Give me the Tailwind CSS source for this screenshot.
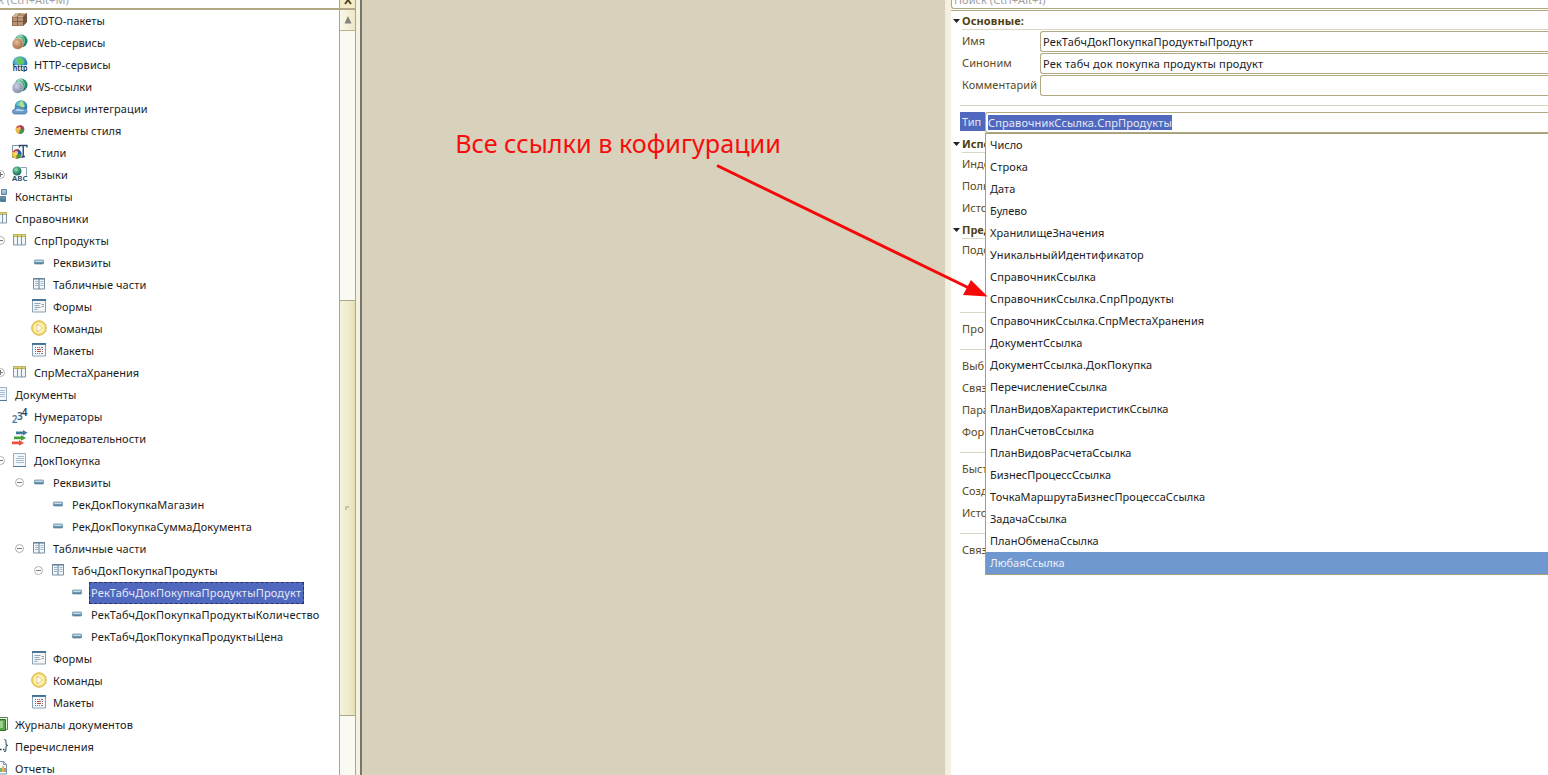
<!DOCTYPE html>
<html lang="ru">
<head>
<meta charset="utf-8">
<title>Конфигуратор</title>
<script src="https://cdn.jsdelivr.net/npm/@tailwindcss/browser@4"></script>
</head>
<body class="relative flex h-[775px] w-[1548px] overflow-hidden bg-[#d8d2bd] font-['Noto_Sans',sans-serif] text-[11px] text-[#1c1c1c]">

<svg class="absolute h-0 w-0">
  <defs>
    <linearGradient id="gb" x1="0" y1="0" x2="0" y2="1"><stop offset="0" stop-color="#b5d3e4"/><stop offset="1" stop-color="#41718f"/></linearGradient>
    <radialGradient id="gg" cx=".4" cy=".35" r=".75"><stop offset="0" stop-color="#a5dfb8"/><stop offset=".5" stop-color="#2f9a72"/><stop offset="1" stop-color="#155a5c"/></radialGradient>
    <radialGradient id="gl" cx=".4" cy=".3" r=".8"><stop offset="0" stop-color="#8fd8c0"/><stop offset=".45" stop-color="#38a0c4"/><stop offset="1" stop-color="#1d5fa0"/></radialGradient>
    <radialGradient id="go" cx=".4" cy=".35" r=".7"><stop offset="0" stop-color="#e8bc94"/><stop offset="1" stop-color="#9c6440"/></radialGradient>
    <radialGradient id="gs" cx=".4" cy=".35" r=".7"><stop offset="0" stop-color="#ccd4e4"/><stop offset="1" stop-color="#76849f"/></radialGradient>
    <radialGradient id="gy" cx=".5" cy=".5" r=".5"><stop offset="0" stop-color="#fffce8"/><stop offset=".65" stop-color="#fbf0a8"/><stop offset="1" stop-color="#ecca50"/></radialGradient>
  </defs>
  <symbol id="minus" viewBox="0 0 10 10"><circle cx="5.500" cy="4.500" r="4" fill="#fff" stroke="#a8a8a8" stroke-width=".9"/><path d="M3 4.500h5" stroke="#777"/></symbol>
  <symbol id="plus" viewBox="0 0 10 10"><circle cx="5.500" cy="4.500" r="4" fill="#fff" stroke="#a8a8a8" stroke-width=".9"/><path d="M3 4.500h5M5.500 2v5" stroke="#777"/></symbol>
  <symbol id="box" viewBox="0 0 16 16"><path d="M4 1h11v9l-4 4H0V5z" fill="#8d6b50"/><path d="M4 1h11l-4 4H0z" fill="#d3b394"/><path d="M1 5.500h10v8H1z" fill="#b89474"/><path d="M11 5l4-4v9l-4 4z" fill="#765640"/><path d="M.5 9.500h10.500l4-4M5.500 5v9M7 3h6M8 1L5 5" stroke="#6b4c38" stroke-width=".7" fill="none"/></symbol>
  <symbol id="web" viewBox="0 0 16 16"><circle cx="9" cy="7" r="6.500" fill="url(#gg)"/><path d="M5.500 2.500q3-2 5.500 0" fill="none" stroke="#c8ecd4"/><path d="M11.500 3.500q2 3 .5 6" fill="none" stroke="#6fc59a"/><circle cx="5.700" cy="9.700" r="5.600" fill="url(#go)" stroke="#f4efe9" stroke-width=".5"/></symbol>
  <symbol id="ws" viewBox="0 0 16 16"><circle cx="9" cy="7" r="6.500" fill="url(#gg)"/><path d="M5.500 2.500q3-2 5.500 0" fill="none" stroke="#c8ecd4"/><path d="M11.500 3.500q2 3 .5 6" fill="none" stroke="#6fc59a"/><circle cx="5.700" cy="9.700" r="5.600" fill="url(#gs)" stroke="#eef1f6" stroke-width=".5"/></symbol>
  <symbol id="http" viewBox="0 0 16 16"><circle cx="8" cy="7.500" r="7.300" fill="url(#gl)"/><path d="M5 2c3-1 6 0 7 3s-3 4-5 3-3-4-2-6" fill="#68c65a"/><path d="M1 9h15v7H1z" fill="#fff" opacity=".85"/><text x=".8" y="15" font-family="Noto Sans" font-weight="600" font-size="8" textLength="14.700" lengthAdjust="spacingAndGlyphs" fill="#1c2a38">http</text></symbol>
  <symbol id="cloud" viewBox="0 0 16 16"><circle cx="9" cy="6.500" r="6.300" fill="url(#gl)"/><path d="M9 1c3 0 2 3 4 5l-2 2-4-3z" fill="#b5df83"/><path d="M2.500 14C-.5 13.500 0 9.500 3 9c1-3 5-3 6-1 3-.5 6 1 6 3s-1 3-3 3z" fill="#6b9ccc" stroke="#356a9f" stroke-width=".7"/><path d="M3 11q2-3 5-1.500 4 0 4 1.500z" fill="#bfd9ef"/></symbol>
  <symbol id="ball" viewBox="0 0 16 16"><circle cx="8" cy="7.500" r="4.300" fill="#d0403a"/><path d="M8 7.500V3.200a4.300 4.300 0 0 1 4.300 4.300z" fill="#a8445a"/><path d="M8 7.500h4.300a4.300 4.300 0 0 1-5.300 4.200z" fill="#3f9b50"/><path d="M8 7.500L4.300 5.500A4.300 4.300 0 0 0 7 11.700z" fill="#edbd35"/><circle cx="7.300" cy="6.300" r="1.500" fill="#ffe6a6" opacity=".7"/></symbol>
  <symbol id="style" viewBox="0 0 16 16"><path d="M.5 1.500h11v12H.5z" fill="#f8fafc" stroke="#7d93aa"/><circle cx="4.800" cy="10" r="4.700" fill="#d93b35"/><path d="M4.800 10V5.300A4.700 4.700 0 0 1 9.500 10z" fill="#285ab0"/><path d="M4.800 10H9.500a4.700 4.700 0 0 1-5.300 4.700z" fill="#3d9d49"/><path d="M4.800 10L.8 7.500A4.700 4.700 0 0 0 4.200 14.600z" fill="#f0ce30"/><circle cx="4.200" cy="9" r="2" fill="#fff0a8" opacity=".75"/><path d="M7 1.500h8.500M7.500 1v2.500M15 1v2.500M11.200 1v11.500M9.500 12.500h3.500" stroke="#294d6b" stroke-width="1.300" fill="none"/></symbol>
  <symbol id="lang" viewBox="0 0 16 16"><path d="M8.500 1.500h6v8" fill="none" stroke="#8da3b8"/><circle cx="5" cy="5" r="4.500" fill="url(#gg)"/><text x="0" y="15" font-family="Noto Sans" font-weight="600" font-size="7" textLength="15.500" lengthAdjust="spacingAndGlyphs" fill="#1e4868">ABC</text></symbol>
  <symbol id="const" viewBox="0 0 16 16"><path d="M8.500 1.500h5v5h-5zM1.500 8.500h4v4h-4zM7.500 8.500h5v5h-5z" fill="url(#gb)" stroke="#40708f" stroke-width=".8"/></symbol>
  <symbol id="cat" viewBox="0 0 16 16"><path d="M1.500 2.500h12v10.500h-12z" fill="#f0f5f9" stroke="#8299ad"/><path d="M1 2h13v3H1z" fill="#bdb552"/><path d="M1.500 4v9M5.500 4v9M9.500 4v9M13.500 4v9" stroke="#7d94aa"/><path d="M2 3.500h3M6 3.500h3M10 3.500h3" stroke="#ddd584"/></symbol>
  <symbol id="req" viewBox="0 0 16 16"><rect x="3.400" y="6" width="9.200" height="4" rx=".8" fill="url(#gb)" stroke="#6f93ab" stroke-width=".8"/><path d="M4.500 7.500h7" stroke="#c4dce8"/></symbol>
  <symbol id="tab" viewBox="0 0 16 16"><path d="M2.500 2.500h11v10.500h-11z" fill="#f4f8fb" stroke="#7890a6"/><path d="M2 3h12" stroke="#56748e"/><path d="M8 2v11" stroke="#5b7893"/><path d="M4 5.500h3M4 7.500h3M4 9.500h3M9.500 5.500h3M9.500 7.500h3M9.500 9.500h3" stroke="#a3b5c4"/></symbol>
  <symbol id="form" viewBox="0 0 16 16"><path d="M1.500 1.500h13v12.500h-13z" fill="#f2f6f9" stroke="#88a1b5"/><path d="M1 2h14" stroke="#3d6c8f" stroke-width="1.800"/><path d="M3.500 5.500h6M3.500 7.500h5M3.500 9.500h6M3.500 11.500h3M10.500 6.500h2.500M10.500 8.500h2.500" stroke="#9aa4ab"/></symbol>
  <symbol id="cmd" viewBox="0 0 16 16"><circle cx="8" cy="8" r="7.300" fill="url(#gy)" stroke="#d6b04a" stroke-width=".9"/><path d="M6 4v8l5.500-4z" fill="#fffef6" stroke="#d8bb64" stroke-width=".8"/></symbol>
  <symbol id="mak" viewBox="0 0 16 16"><path d="M1.500 1.500h13v12.500h-13z" fill="#f7fafc" stroke="#88a1b5"/><path d="M1 2h14" stroke="#3d6c8f" stroke-width="1.800"/><path d="M4 5.500h8M4 11.500h8M4.500 5v7M11.500 5v7" fill="none" stroke="#777" stroke-dasharray="1 1"/><path d="M6 7.500h4M6 9.500h4" stroke="#c8433c" stroke-width="1.100"/></symbol>
  <symbol id="doc" viewBox="0 0 16 16"><path d="M1.500 1.500h12v13h-12z" fill="#f1f7fc" stroke="#9cb1c4"/><path d="M1 14.500h13" stroke="#527799"/><path d="M6 4.500h6M4 6.500h8M4 8.500h8M4 10.500h8" stroke="#a9bdd0"/></symbol>
  <symbol id="num" viewBox="0 0 16 16"><g font-family="Noto Sans" font-weight="600" fill="#315f83"><text x="-.2" y="15" font-size="10" fill="#4d80a8">2</text><text x="5" y="11.500" font-size="10">3</text><text x="9.800" y="7.500" font-size="10" fill="#24455f">4</text></g></symbol>
  <symbol id="seq" viewBox="0 0 16 16"><path d="M4 1.500h7V0L15.500 2.700 11 5.500V4.200H4z" fill="#3f7a9d"/><path d="M2 6.500h7V5l5 2.900-5 2.900V9.300H2z" fill="#43a33b"/><path d="M0 11.500h7V10l5 2.900-5 2.900V14.300H0z" fill="#e8523f"/></symbol>
  <symbol id="jour" viewBox="0 0 16 16"><path d="M5 1.500h9.500v12H5z" fill="#e9f5e2" stroke="#4d8a42"/><path d="M2 3.500h10.500v11H2z" fill="#58a64c" stroke="#2f7029"/><path d="M3 5h7v7H3z" fill="#9bd08b"/></symbol>
  <symbol id="enum" viewBox="0 0 16 16"><path d="M11 1.500q2 0 2 2v2q0 2 2 2-2 0-2 2v2q0 2-2 2" fill="none" stroke="#456b88" stroke-width="1.200"/><path d="M7 11.500h1.500M10 11.500h1.500" stroke="#333" stroke-width="1.300"/></symbol>
  <symbol id="rep" viewBox="0 0 16 16"><path d="M2.500 1.500h8l3 3v9.500h-11z" fill="#f8fbfe" stroke="#7795ac"/><path d="M10.500 1.500v3h3" fill="none" stroke="#7795ac"/><path d="M8 12V8" stroke="#4e9b48" stroke-width="1.500"/><path d="M10 12V6" stroke="#cfa530" stroke-width="1.500"/><path d="M12 12V8" stroke="#c36d35" stroke-width="1.500"/></symbol>
</svg>

<!-- Дерево конфигурации -->
<aside class="flex h-full w-[362px] shrink-0 border-r-2 border-[#77766b] bg-[#f4f1de]">
  <div class="flex w-[339px] flex-col overflow-hidden bg-white">
    <div class="flex h-[10px] shrink-0 items-end border-b-2 border-[#b0a983] text-[#a0a0a0]"><span class="-ml-[29px] mb-[1px] whitespace-nowrap leading-[15px] tracking-[.05px]">Поиск (Ctrl+Alt+M)</span></div>
    <ul id="tree" class="flex flex-col"></ul>
  </div>
  <div class="flex w-[17px] shrink-0 flex-col border-x border-[#aaa790] bg-[#faf9f4]">
    <div class="flex h-[10px] shrink-0 items-start justify-center overflow-hidden border-b-2 border-[#b0a983] bg-[#f3ebc8]"><svg class="h-[7px] w-[10px]" viewBox="0 0 10 7"><path d="M2-4l6 8M8-4L2 4" stroke="#4b3c12" stroke-width="1.800"/></svg></div>
    <div class="flex h-[21px] shrink-0 items-center justify-center border-b border-[#b5b18f] bg-linear-to-r from-[#faf8ea] to-[#ece7c6]"><svg class="h-[8px] w-[8px]" viewBox="0 0 8 8"><path d="M4 0l3.500 7.500h-7z" fill="#85847c"/></svg></div>
    <div class="h-[269px] shrink-0"></div>
    <div class="flex h-[416px] shrink-0 items-center justify-center border-y border-[#aaa790] bg-linear-to-r from-[#f5f2dc] via-[#f0ecd0] to-[#e6e0b8]"><svg class="h-[5px] w-[5px]" viewBox="0 0 5 5"><path d="M1 4V1h3" fill="none" stroke="#bcb893" stroke-width="1.500"/></svg></div>
  </div>
</aside>

<main class="flex w-[583px] shrink-0 justify-center">
  <h1 class="ml-[-71px] mt-[126px] whitespace-nowrap text-[25.2px] leading-[34px] text-[#f80d0d]">Все ссылки в кофигурации</h1>
</main>

<!-- Палитра свойств -->
<section class="flex w-[603px] shrink-0 border-l-2 border-[#f0ede2] bg-[#f4f1de] pl-1">
  <div class="flex w-full flex-col bg-white text-[#5a4a20]">
    <div class="flex h-[11px] shrink-0 flex-col border-b border-[#b0a983]">
      <div class="flex h-[9px] items-end rounded-bl-[3px] border-b border-l border-[#b0a983] pl-[2px] text-[#a0a0a0]"><span class="mb-[1px] leading-[15px] tracking-[.05px]">Поиск (Ctrl+Alt+I)</span></div>
    </div>
    <div class="flex h-[18px] shrink-0 items-center gap-[2px] pl-[2px] pt-[2px] text-[#4f3f14]"><svg class="h-[4px] w-[7px]" viewBox="0 0 7 4"><path d="M0 0h7L3.500 4z" fill="#222"/></svg><b class="tracking-[.1px]">Основные:</b></div>
    <div class="mb-px ml-[11px] h-px shrink-0 bg-[#d9d6c6]"></div>
    <div class="flex flex-col gap-px pl-[11px]">
      <div class="flex h-[21px]"><span class="w-[78px] leading-[19px]">Имя</span><div class="flex-1 rounded-l-[3px] border border-r-0 border-[#b0a983] pl-[2px] leading-[20px] tracking-[.16px] text-[#1c1c1c]">РекТабчДокПокупкаПродуктыПродукт</div></div>
      <div class="flex h-[21px]"><span class="w-[78px] leading-[19px] tracking-[.1px]">Синоним</span><div class="flex-1 rounded-l-[3px] border border-r-0 border-[#b0a983] pl-[2px] leading-[20px] tracking-[.19px] text-[#1c1c1c]">Рек табч док покупка продукты продукт</div></div>
      <div class="flex h-[21px]"><span class="w-[78px] leading-[19px] tracking-[.05px]">Комментарий</span><div class="flex-1 rounded-l-[3px] border border-r-0 border-[#b0a983]"></div></div>
    </div>
    <div class="ml-[9px] mt-[9px] h-px shrink-0 bg-[#d9d6c6]"></div>
    <div class="mt-[6px] flex h-[21px] shrink-0 pl-[9px]"><span class="h-[19px] w-[25px] bg-[#5068be] pl-[2px] leading-[20px] text-[#e4e8f8]">Тип</span><div class="flex flex-1 items-center rounded-l-[3px] border border-r-0 border-[#b0a983] pl-[2px]"><span class="bg-[#5068be] leading-[15px] tracking-[.14px] text-[#e4e8f8]">СправочникСсылка.СпрПродукты</span></div></div>
    <div class="flex w-[34px] flex-col overflow-hidden whitespace-nowrap leading-[22px]">
      <div class="mt-[1px] flex h-[19px] items-center gap-[2px] pl-[2px] text-[#4f3f14]"><svg class="h-[4px] w-[7px] shrink-0" viewBox="0 0 7 4"><path d="M0 0h7L3.500 4z" fill="#222"/></svg><b>Испо</b></div>
      <div class="ml-[11px] mt-[-1px] h-px shrink-0 bg-[#d9d6c6]"></div>
      <div class="h-[22px] pl-[11px]">Инде</div>
      <div class="h-[22px] pl-[11px]">Полн</div>
      <div class="h-[22px] pl-[11px]">Исто</div>
      <div class="flex h-[19px] items-center gap-[2px] pl-[2px] pt-[2px] text-[#4f3f14]"><svg class="h-[4px] w-[7px] shrink-0" viewBox="0 0 7 4"><path d="M0 0h7L3.500 4z" fill="#222"/></svg><b>Пред</b></div>
      <div class="ml-[11px] h-px shrink-0 bg-[#d9d6c6]"></div>
      <div class="h-[22px] pl-[11px]">Подс</div>
      <div class="ml-[9px] mt-[51px] h-px shrink-0 bg-[#d9d6c6]"></div>
      <div class="mt-[5px] h-[22px] pl-[11px] tracking-[.3px]">Про</div>
      <div class="ml-[9px] mt-[9px] h-px shrink-0 bg-[#d9d6c6]"></div>
      <div class="mt-[5px] h-[22px] pl-[11px]">Выб</div>
      <div class="h-[22px] pl-[11px]">Связ</div>
      <div class="h-[22px] pl-[11px]">Пара</div>
      <div class="h-[22px] pl-[11px]">Фор</div>
      <div class="ml-[9px] mt-[9px] h-px shrink-0 bg-[#d9d6c6]"></div>
      <div class="mt-[5px] h-[22px] pl-[11px]">Быст</div>
      <div class="h-[22px] pl-[11px]">Созд</div>
      <div class="h-[22px] pl-[11px]">Исто</div>
      <div class="ml-[9px] mt-[9px] h-px shrink-0 bg-[#d9d6c6]"></div>
      <div class="mt-[5px] h-[22px] pl-[11px]">Связ</div>
    </div>
  </div>
</section>

<!-- Выпадающий список типов -->
<ul class="absolute left-[985px] top-[133px] h-[442px] w-[563px] border border-r-0 border-[#a59e78] bg-white leading-[22px] *:h-[22px] *:pl-1">
  <li>Число</li><li class="tracking-[.15px]">Строка</li><li>Дата</li><li>Булево</li><li class="tracking-[.04px]">ХранилищеЗначения</li><li class="tracking-[.13px]">УникальныйИдентификатор</li><li class="tracking-[.13px]">СправочникСсылка</li><li class="tracking-[.14px]">СправочникСсылка.СпрПродукты</li><li class="tracking-[.07px]">СправочникСсылка.СпрМестаХранения</li><li class="tracking-[.07px]">ДокументСсылка</li><li class="tracking-[.12px]">ДокументСсылка.ДокПокупка</li><li class="tracking-[.03px]">ПеречислениеСсылка</li><li>ПланВидовХарактеристикСсылка</li><li class="tracking-[.05px]">ПланСчетовСсылка</li><li>ПланВидовРасчетаСсылка</li><li>БизнесПроцессСсылка</li><li class="tracking-[.06px]">ТочкаМаршрутаБизнесПроцессаСсылка</li><li>ЗадачаСсылка</li><li>ПланОбменаСсылка</li>
  <li class="bg-[#6f98d0] text-[#eaf1fb]">ЛюбаяСсылка</li>
</ul>

<!-- Стрелка-выноска -->
<svg class="pointer-events-none absolute left-[700px] top-[150px] h-[160px] w-[300px]" viewBox="700 150 300 160"><path d="M717 165.500L970 288.500" stroke="#f60808" stroke-width="3"/><path d="M987.500 296.500L971 280L963 295Z" fill="#f60808"/></svg>

<script>
const indent = ["-ml-[24px]", "-ml-[5px]", "ml-[14px]", "ml-[33px]", "ml-[52px]"];
const spacing = ["tracking-normal", "tracking-[.09px]", "tracking-[.16px]"];
// [уровень, значок, подпись, межбуквенный интервал, узел: "plus" | "minus"]
const rows = [
  [1,"box","XDTO-пакеты",1],[1,"web","Web-сервисы",0],[1,"http","HTTP-сервисы",1],[1,"ws","WS-ссылки",0],[1,"cloud","Сервисы интеграции",1],
  [1,"ball","Элементы стиля",0],[1,"style","Стили",0],[1,"lang","Языки",1,"plus"],[0,"const","Константы",1],[0,"cat","Справочники",2],
  [1,"cat","СпрПродукты",2,"minus"],[2,"req","Реквизиты",1],[2,"tab","Табличные части",1],[2,"form","Формы",0],[2,"cmd","Команды",0],[2,"mak","Макеты",0],
  [1,"cat","СпрМестаХранения",0,"plus"],[0,"doc","Документы",1],[1,"num","Нумераторы",1],[1,"seq","Последовательности",0],
  [1,"doc","ДокПокупка",2,"minus"],[2,"req","Реквизиты",1,"minus"],[3,"req","РекДокПокупкаМагазин",2],[3,"req","РекДокПокупкаСуммаДокумента",1],
  [2,"tab","Табличные части",1,"minus"],[3,"tab","ТабчДокПокупкаПродукты",2,"minus"],[4,"req","РекТабчДокПокупкаПродуктыПродукт",2],
  [4,"req","РекТабчДокПокупкаПродуктыКоличество",2],[4,"req","РекТабчДокПокупкаПродуктыЦена",2],[2,"form","Формы",0],[2,"cmd","Команды",0],[2,"mak","Макеты",0],
  [0,"jour","Журналы документов",1],[0,"enum","Перечисления",1],[0,"rep","Отчеты",1]
];
document.getElementById("tree").innerHTML = rows.map(([lvl, icon, text, sp, node], i) =>
  `<li class="flex h-[22px] shrink-0 items-center whitespace-nowrap ${indent[lvl]}">` +
  `<svg class="mr-[7px] h-[10px] w-[10px] shrink-0">${node ? `<use href="#${node}"/>` : ""}</svg>` +
  `<svg class="mb-[2px] mr-1 h-4 w-4 shrink-0"><use href="#${icon}"/></svg>` +
  `<span class="${spacing[sp]} ${i === 26 ? "border border-dashed border-[#2b3560] bg-[#5068be] pl-px pr-[2px] leading-[20px] text-[#e4e8f8]" : "px-[2px] leading-[22px]"}">${text}</span></li>`
).join("");
</script>
</body>
</html>
